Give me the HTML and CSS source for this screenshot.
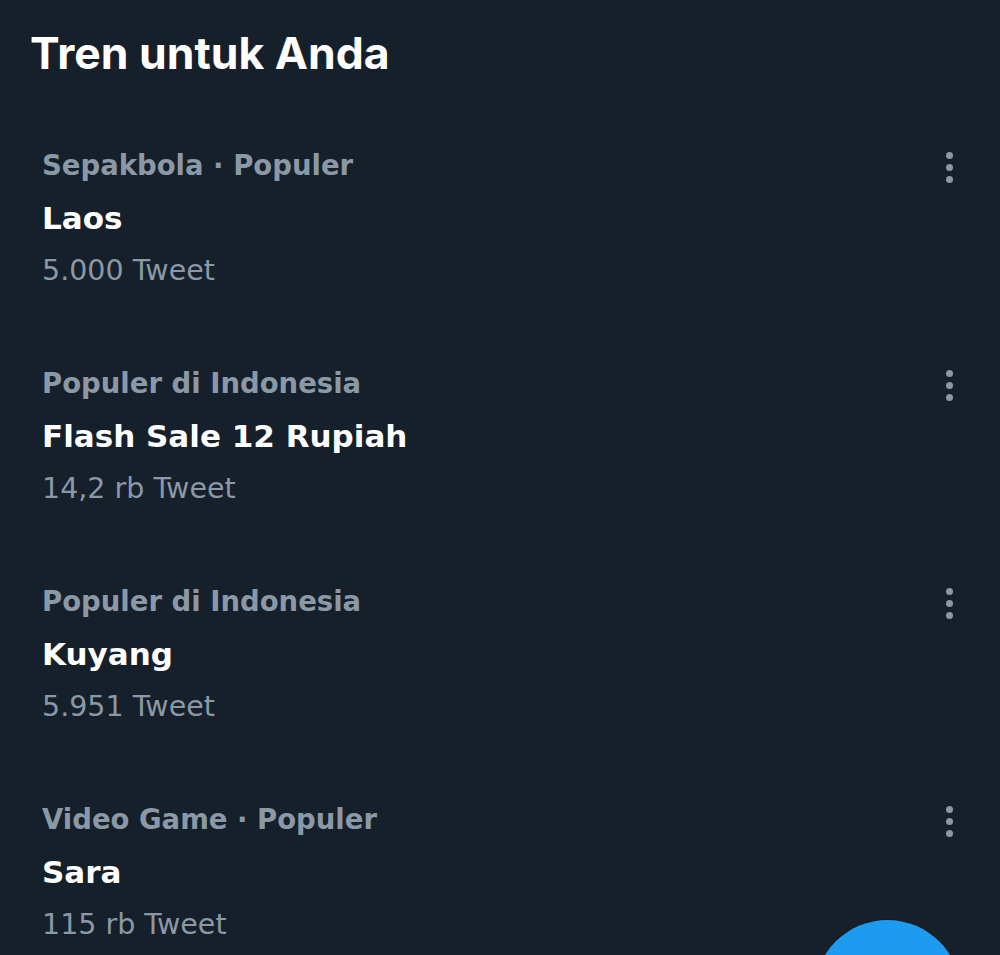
FILE: index.html
```html
<!DOCTYPE html>
<html lang="id">
<head>
<meta charset="utf-8">
<title>Tren untuk Anda</title>
<link rel="stylesheet" href="styles.css">
</head>
<body>
<main class="page">
  <h1 class="title">Tren untuk Anda</h1>
  <ul class="trends">
    <li class="trend">
      <div class="info">
        <div class="meta">Sepakbola · Populer</div>
        <div class="name">Laos</div>
        <div class="count">5.000 Tweet</div>
      </div>
      <span class="more"><i></i><i></i><i></i></span>
    </li>
    <li class="trend">
      <div class="info">
        <div class="meta">Populer di Indonesia</div>
        <div class="name">Flash Sale 12 Rupiah</div>
        <div class="count">14,2 rb Tweet</div>
      </div>
      <span class="more"><i></i><i></i><i></i></span>
    </li>
    <li class="trend">
      <div class="info">
        <div class="meta">Populer di Indonesia</div>
        <div class="name">Kuyang</div>
        <div class="count">5.951 Tweet</div>
      </div>
      <span class="more"><i></i><i></i><i></i></span>
    </li>
    <li class="trend">
      <div class="info">
        <div class="meta">Video Game · Populer</div>
        <div class="name">Sara</div>
        <div class="count">115 rb Tweet</div>
      </div>
      <span class="more"><i></i><i></i><i></i></span>
    </li>
  </ul>
  <div class="fab"></div>
</main>
</body>
</html>
```
FILE: styles.css
```css
* { box-sizing: border-box; }
html, body {
  margin: 0;
  padding: 0;
  background: #16202a;
}
body {
  font-family: "DejaVu Sans", Inter, Arial, sans-serif;
  color: #f7f9f9;
}
.page {
  position: relative;
  height: 955px;
  overflow: hidden;
  padding-top: 26px;
}
.title {
  margin: 0;
  padding-left: 30px;
  font-family: Inter, "DejaVu Sans", Arial, sans-serif;
  font-size: 44.5px;
  line-height: 55px;
  font-weight: 700;
  color: #ffffff;
}
.trends {
  list-style: none;
  margin: 58px 0 0 0;
  padding: 0;
}
.trend {
  display: flex;
  justify-content: space-between;
  align-items: flex-start;
  padding-left: 42px;
  padding-right: 47px;
  height: 218px;
}
.info > div {
  white-space: nowrap;
}
.meta {
  color: #8b98a5;
  font-weight: 700;
  font-size: 27.5px;
  line-height: 52px;
}
.name {
  color: #ffffff;
  font-weight: 700;
  font-size: 31px;
  line-height: 54px;
}
.count {
  color: #8b98a5;
  font-weight: 400;
  font-size: 28.5px;
  line-height: 52px;
}
.more {
  display: flex;
  flex-direction: column;
  gap: 5px;
  padding-top: 13px;
}
.more i {
  display: block;
  width: 7px;
  height: 7px;
  border-radius: 50%;
  background: #8b98a5;
}
.fab {
  position: absolute;
  left: 814px;
  top: 920px;
  width: 147px;
  height: 147px;
  border-radius: 50%;
  background: #1d9bf0;
  box-shadow: 0 0 0 1px rgba(0, 0, 0, 0.2);
}
```
